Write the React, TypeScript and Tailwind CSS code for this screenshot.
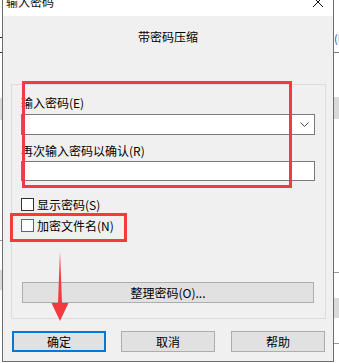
import React from "react";

function Checkbox({ label, focused }: { label: string; focused?: boolean }) {
  return (
    <div className="flex items-center h-[17px]">
      <span
        className={`w-[13px] h-[13px] bg-white border ${
          focused ? "border-[#1f73d2]" : "border-[#333333]"
        }`}
      />
      <span className="ml-[3px] leading-[17px]">{label}</span>
    </div>
  );
}

function Button({ label, primary, className = "" }: { label: string; primary?: boolean; className?: string }) {
  return (
    <div
      className={`h-[21px] flex items-center justify-center bg-[#e1e1e1] leading-[17px] ${
        primary ? "border-2 border-[#0078d7]" : "border border-[#adadad]"
      } ${className}`}
    >
      {label}
    </div>
  );
}

export default function App() {
  return (
    <div className="relative w-[339px] h-[363px] overflow-hidden bg-white flex text-[12px] text-black font-['Noto_Sans_CJK_SC','Noto_Sans',sans-serif]">
      {/* window behind, left edge */}
      <div className="w-[2px] flex flex-col shrink-0">
        <div className="h-[37px]" />
        <div className="h-px bg-[#333]" />
        <div className="h-[14px]" />
        <div className="h-px bg-[#333]" />
        <div className="h-[45px]" />
        <div className="h-[22px] bg-[#d9d9d9]" />
        <div className="h-[120px]" />
        <div className="h-px bg-[#999]" />
        <div className="h-[29px]" />
        <div className="h-[20px] bg-[#d9d9d9]" />
      </div>

      {/* dialog */}
      <div className="w-[332px] h-[362px] shrink-0 flex flex-col border-x border-b border-[#6e6e6e]">
        <div className="h-[16px] bg-white overflow-hidden flex justify-between">
          <div className="-mt-[8px] h-[20px] leading-[20px] pl-[3px] text-[#111]">输入密码</div>
          <svg width="12" height="12" viewBox="0 0 12 12" className="-mt-[4px] mr-[9px]">
            <path d="M1 1 L11 11 M11 1 L1 11" stroke="#111" strokeWidth="1" fill="none" />
          </svg>
        </div>

        <div className="flex-1 bg-[#f0f0f0] flex flex-col">
          <div className="pt-[12px] leading-[17px] text-center">带密码压缩</div>

          <div className="mt-[39px] ml-[8px] w-[315px] h-[235px] border border-[#dcdcdc] pl-[9px] pr-[10px] pt-[10px] flex flex-col">
            <div className="leading-[16px]">输入密码(E)</div>
            <div className="mt-[3px] h-[21px] bg-white border border-[#7a7a7a] flex items-center justify-end pr-[5px]">
              <svg width="9" height="5" viewBox="0 0 9 5">
                <path d="M0.5 0.5 L4.5 4.5 L8.5 0.5" stroke="#444" strokeWidth="1" fill="none" />
              </svg>
            </div>
            <div className="mt-[8px] leading-[16px]">再次输入密码以确认(R)</div>
            <div className="mt-[2px] h-[20px] bg-white border border-[#7a7a7a]" />

            <div className="mt-[15px]">
              <Checkbox label="显示密码(S)" />
            </div>
            <div className="mt-[4px]">
              <Checkbox label="加密文件名(N)" focused />
            </div>

            <Button label="整理密码(O)..." className="mt-[48px] mx-[1px]" />
          </div>

          <div className="mt-[12px] flex">
            <Button label="确定" primary className="ml-[9px] w-[94px]" />
            <Button label="取消" className="ml-[15px] w-[94px]" />
            <Button label="帮助" className="ml-[16px] w-[94px]" />
          </div>
        </div>
      </div>

      {/* window behind, right edge */}
      <div className="flex-1 flex flex-col">
        <div className="h-[32px]" />
        <div className="h-[12px] leading-[12px] text-[11px] text-[#1b4fa0] whitespace-nowrap">(E</div>
        <div className="h-[8px]" />
        <div className="h-px bg-[#777]" />
        <div className="h-[44px]" />
        <div className="h-[22px] bg-[#d9d9d9]" />
        <div className="h-[153px]" />
        <div className="h-px bg-[#999]" />
        <div className="h-[25px]" />
        <div className="h-[20px] bg-[#d9d9d9]" />
        <div className="h-[25px]" />
        <div className="h-px bg-[#999]" />
      </div>

      {/* annotations */}
      <div className="absolute left-[22px] top-[81px] w-[270px] h-[107px] border-[3px] border-[#f23a3f]" />
      <div className="absolute left-[10px] top-[213px] w-[117px] h-[29px] border-[3px] border-[#f23a3f]" />
      <svg className="absolute left-[50px] top-[250px]" width="20" height="72" viewBox="0 0 20 72">
        <path d="M10 1.5 L12 53 L18.5 53 L10 71 L1.5 53 L8 53 Z" fill="#f23a3f" />
      </svg>
    </div>
  );
}
